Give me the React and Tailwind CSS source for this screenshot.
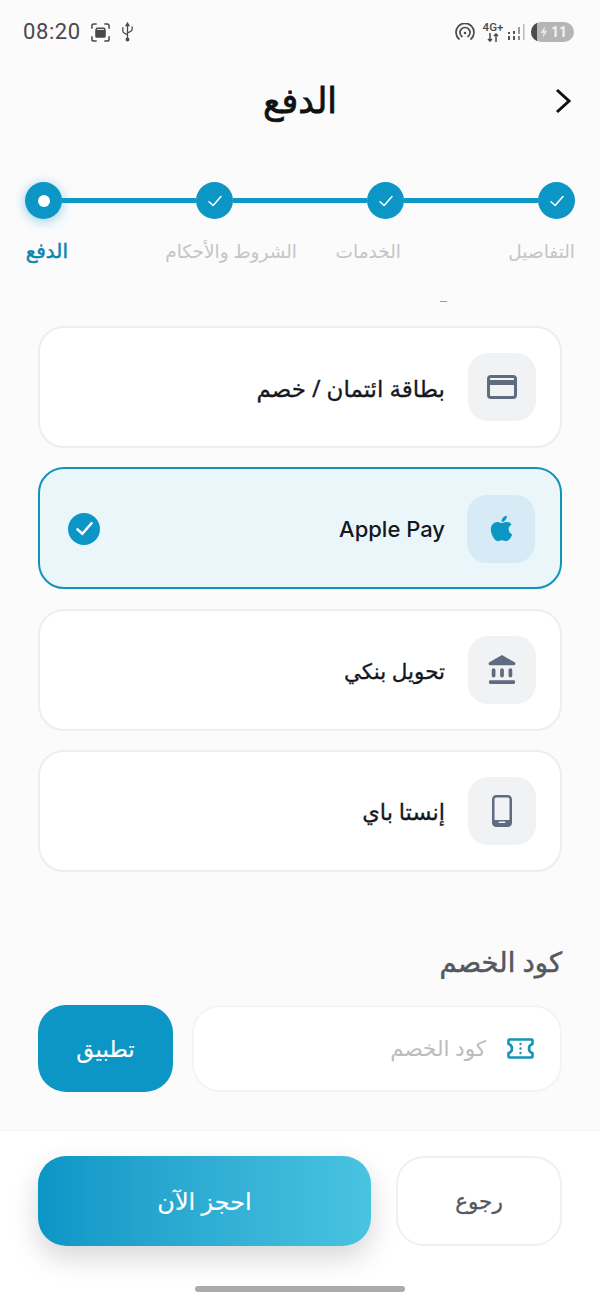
import { FaApple } from 'react-icons/fa'

function Check({ className, width = 2 }) {
  return (
    <svg viewBox="0 0 24 24" fill="none" stroke="currentColor" strokeWidth={width} strokeLinecap="round" strokeLinejoin="round" className={className}>
      <path d="M4 13 L9.5 18 L20 6" />
    </svg>
  )
}

function CardIcon() {
  return (
    <svg width="30" height="24" viewBox="0 0 30 24" fill="none">
      <rect x="1.5" y="1.5" width="27" height="21" rx="2.5" stroke="#5f6b80" strokeWidth="3" />
      <rect x="2" y="5" width="26" height="5" fill="#5f6b80" />
    </svg>
  )
}

function BankIcon() {
  return (
    <svg width="28" height="30" viewBox="0 0 30 32" fill="#5f6b80">
      <path d="M15 0 L29 8 Q30 10 28 11 L2 11 Q0 10 1 8 Z" />
      <rect x="4" y="14" width="4" height="10" rx="2" />
      <rect x="13" y="14" width="4" height="10" rx="2" />
      <rect x="22" y="14" width="4" height="10" rx="2" />
      <rect x="1" y="27" width="28" height="4" rx="1.5" />
    </svg>
  )
}

function PhoneIcon() {
  return (
    <svg width="20" height="32" viewBox="0 0 20 32" fill="none">
      <rect x="1.25" y="1.25" width="17.5" height="29.5" rx="3" stroke="#5f6b80" strokeWidth="2.5" />
      <rect x="2" y="25" width="16" height="5" fill="#5f6b80" />
      <rect x="6.5" y="26.5" width="7" height="1.6" rx="0.8" fill="#eef0f3" />
    </svg>
  )
}

function TicketIcon() {
  return (
    <svg width="27" height="21" viewBox="0 0 27 21" fill="none">
      <path d="M2.5 1.5 H24.5 Q25.5 1.5 25.5 2.5 V6 Q22 7 22 10.5 Q22 14 25.5 15 V18.5 Q25.5 19.5 24.5 19.5 H2.5 Q1.5 19.5 1.5 18.5 V15 Q5 14 5 10.5 Q5 7 1.5 6 V2.5 Q1.5 1.5 2.5 1.5 Z" stroke="#1593b8" strokeWidth="2.6" strokeLinejoin="round" />
      <circle cx="13.5" cy="6" r="1.2" fill="#1593b8" />
      <circle cx="13.5" cy="10.5" r="1.2" fill="#1593b8" />
      <circle cx="13.5" cy="15" r="1.2" fill="#1593b8" />
    </svg>
  )
}

function StatusBar() {
  return (
    <div dir="ltr" className="h-[64px] flex items-center justify-between pl-[23px] pr-[26px] text-[#4a4a4a]">
      <div className="flex items-center">
        <span className="text-[22px] font-['Roboto',sans-serif] leading-none tracking-[0.6px]">08:20</span>
        <svg width="19" height="19" viewBox="0 0 20 20" fill="none" stroke="#4a4a4a" strokeWidth="1.6" className="ml-[10px]">
          <path d="M1 6 V3 Q1 1 3 1 H6 M14 1 H17 Q19 1 19 3 V6 M19 14 V17 Q19 19 17 19 H14 M6 19 H3 Q1 19 1 17 V14" />
          <rect x="5.5" y="5.5" width="9" height="9" rx="1" />
          <rect x="5.5" y="8" width="9" height="6.5" fill="#4a4a4a" />
        </svg>
        <svg width="13" height="20" viewBox="0 0 14 20" fill="none" stroke="#4a4a4a" strokeWidth="1.4" className="ml-[11px]">
          <path d="M7 2 V19 M2 5 V9 Q2 11 7 13 M12 4 V7 Q12 9 7 11" />
          <circle cx="7" cy="18" r="1.4" fill="#4a4a4a" />
          <path d="M7 0.5 L5.5 3 H8.5 Z" fill="#4a4a4a" />
        </svg>
      </div>
      <div className="flex items-center">
        <svg width="20" height="18" viewBox="0 0 20 18" fill="none" stroke="#4a4a4a" strokeWidth="1.7" strokeLinecap="round">
          <path d="M4 16 A9 9 0 1 1 16 16" />
          <path d="M7 13.5 A5 5 0 1 1 13 13.5" />
          <circle cx="10" cy="10" r="1.3" fill="#4a4a4a" stroke="none" />
        </svg>
        <div className="ml-[6px] w-[24px] flex flex-col items-center leading-none font-['Roboto',sans-serif] text-[#4a4a4a]">
          <span className="text-[11.5px] font-medium leading-[11px]">4G+</span>
          <svg width="12" height="9" viewBox="0 0 12 9" fill="none" stroke="#4a4a4a" strokeWidth="1.5">
            <path d="M3 0 V8 M1 6 L3 8 L5 6 M9 9 V1 M7 3 L9 1 L11 3" />
          </svg>
        </div>
        <svg width="17" height="18" viewBox="0 0 17 18" className="ml-[3px]" fill="#555">
          <rect x="0" y="13" width="2" height="4" />
          <rect x="0" y="9" width="2" height="2" />
          <rect x="5" y="13" width="2" height="4" />
          <rect x="5" y="8" width="2" height="3" />
          <rect x="10" y="13" width="2" height="4" fill="#888" />
          <rect x="10" y="4" width="2" height="7" fill="#999" />
          <rect x="15" y="1" width="1.5" height="16" fill="#bbb" />
        </svg>
        <div className="ml-[6px] relative w-[43px] h-[20px] rounded-full bg-[#b5b5b5] overflow-hidden flex items-center justify-end pr-[7px]">
          <div className="absolute left-0 top-0 bottom-0 w-[6px] bg-[#4a4a4a]" />
          <svg width="8" height="12" viewBox="0 0 9 13" fill="#e6e6e6" className="absolute left-[9px] top-[4px]">
            <path d="M5.5 0 L0.5 7.5 H4 L3 13 L8.5 5 H5 Z" />
          </svg>
          <span className="text-[#f2f2f2] text-[14px] font-bold font-['Roboto',sans-serif] leading-none">11</span>
        </div>
      </div>
    </div>
  )
}

const steps = [
  { label: 'التفاصيل', labelBox: 'w-[69px] ml-[105px]' },
  { label: 'الخدمات', labelBox: 'w-[63px] ml-[41px]' },
  { label: 'الشروط والأحكام', labelBox: 'w-[132px] ml-[97px]' },
  { label: 'الدفع', labelBox: 'w-[43px]', active: true },
]

function Stepper() {
  return (
    <div className="px-[25px] pt-[40px]">
      <div className="flex items-center">
        {steps.map((s, i) => (
          <div key={s.label} className={`flex items-center ${i < 3 ? 'flex-1' : ''}`}>
            <div className={`w-[37px] h-[37px] rounded-full bg-[#0b96c6] flex items-center justify-center shrink-0 ${s.active ? 'shadow-[0_2px_12px_rgba(11,150,198,0.45)]' : ''}`}>
              {s.active ? <div className="w-[12px] h-[12px] rounded-full bg-white" /> : <Check className="w-[18px] h-[18px] text-white" />}
            </div>
            {i < 3 && <div className="flex-1 h-[5px] bg-[#0f98c5]" />}
          </div>
        ))}
      </div>
      <div className="flex mt-[18px]">
        {steps.map((s) => (
          <div key={s.label} className={`${s.labelBox} shrink-0 whitespace-nowrap leading-[28px] ${s.active ? 'text-[#0c86ad] text-[20px] [-webkit-text-stroke:0.5px_#0c86ad]' : 'text-[#c4c5c7] text-[18.5px]'}`}>
            {s.label}
          </div>
        ))}
      </div>
    </div>
  )
}

function MethodCard({ icon, label, selected, textClass }) {
  return (
    <div className={`h-[122px] rounded-[26px] border-2 flex items-center pl-[28px] ${selected ? 'pr-[25px] border-[#1293b9] bg-[#eaf6fa]' : 'pr-[24px] border-[#eeeeef] bg-white'}`}>
      <div className={`w-[68px] h-[68px] rounded-[20px] flex items-center justify-center shrink-0 ${selected ? 'bg-[#d6ebf5] mt-[1px]' : 'bg-[#f1f2f4]'}`}>
        {icon}
      </div>
      <span className={`pt-[2px] text-[#15181f] leading-none ${selected ? 'mr-[22px]' : 'mr-[23px] [-webkit-text-stroke:0.3px_#15181f]'} ${textClass}`}>
        {label}
      </span>
      {selected && (
        <div className="mr-auto mt-[1px] w-[32px] h-[32px] rounded-full bg-[#0b96c6] flex items-center justify-center">
          <Check className="w-[21px] h-[21px] text-white" width="3" />
        </div>
      )}
    </div>
  )
}

export default function App() {
  return (
    <div dir="rtl" className="relative w-[600px] h-[1301px] overflow-hidden bg-[#fbfbfc] flex flex-col font-['Noto_Sans','DejaVu_Sans',sans-serif]">
      <StatusBar />

      <div className="h-[78px] relative flex items-center justify-center">
        <h1 className="text-[35px] font-normal text-[#111] leading-none -mt-[8px] [-webkit-text-stroke:0.8px_#111]">الدفع</h1>
        <svg width="18" height="26" viewBox="0 0 18 26" fill="none" stroke="#111" strokeWidth="3" className="absolute right-[28px] top-[24px]">
          <path d="M3 2 L15 13 L3 24" />
        </svg>
      </div>

      <Stepper />

      <div className="h-[1px] w-[7px] bg-[#999] mr-[153px] mt-[36px]" />

      <div className="mx-[38px] mt-[24px] flex flex-col gap-[19.33px]">
        <MethodCard icon={<CardIcon />} label="بطاقة ائتمان / خصم" textClass="text-[23px]" />
        <MethodCard icon={<FaApple className="text-[#0b96c6] text-[29px]" />} label="Apple Pay" selected textClass="font-['Inter',sans-serif] text-[22px] font-medium" />
        <MethodCard icon={<BankIcon />} label="تحويل بنكي" textClass="text-[21.5px]" />
        <MethodCard icon={<PhoneIcon />} label="إنستا باي" textClass="text-[22.5px]" />
      </div>

      <div className="mx-[38px] mt-[70px]">
        <h2 className="text-[27.5px] text-[#55585f] leading-[40px] [-webkit-text-stroke:0.5px_#55585f]">كود الخصم</h2>
        <div className="flex gap-[19px] mt-[23px]">
          <div className="flex-1 h-[87px] rounded-[28px] border-2 border-[#f4f4f5] bg-white flex items-center pr-[26px]">
            <TicketIcon />
            <span className="mr-[21px] text-[21.5px] text-[#bcbcbe]">كود الخصم</span>
          </div>
          <button className="w-[135px] h-[87px] rounded-[28px] bg-[#0b96c6] text-white text-[23px] [-webkit-text-stroke:0.15px_#fff]">تطبيق</button>
        </div>
      </div>

      <div className="absolute bottom-0 left-0 right-0 h-[171px] bg-white border-t border-[#f1f1f2] px-[38px] pt-[25px]">
        <div className="flex gap-[25px]">
          <button className="w-[166px] h-[90px] rounded-[28px] border-2 border-[#f0f0f1] bg-white text-[#55585f] text-[21.5px] [-webkit-text-stroke:0.3px_#55585f]">رجوع</button>
          <button className="flex-1 h-[90px] rounded-[28px] bg-gradient-to-l from-[#48c3e0] to-[#0a96c6] text-white text-[24px] [-webkit-text-stroke:0.15px_#fff] shadow-[0_12px_28px_rgba(0,0,0,0.16)]">احجز الآن</button>
        </div>
        <div className="w-[210px] h-[6px] rounded-full bg-[#ababab] mx-auto mt-[40px]" />
      </div>
    </div>
  )
}
